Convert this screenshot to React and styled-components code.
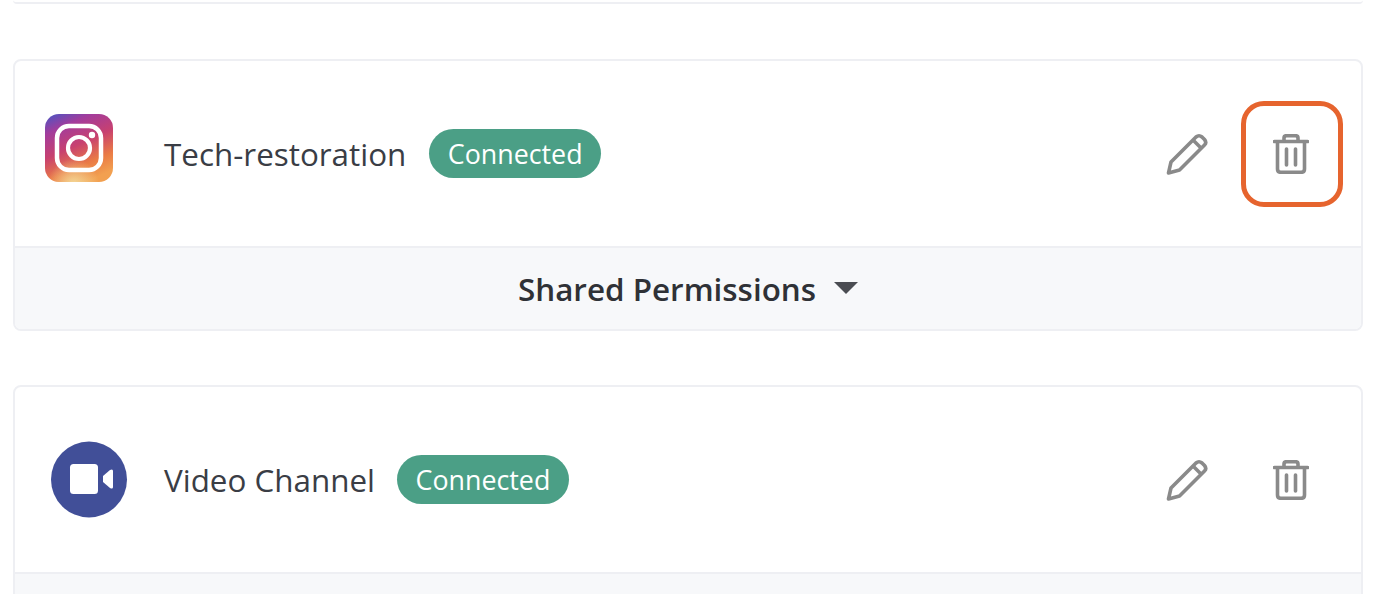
import React from 'react'
import styled, { createGlobalStyle } from 'styled-components'

const GlobalStyle = createGlobalStyle`
  html, body {
    margin: 0;
    height: 100%;
    overflow: hidden;
    background: #fff;
  }
  body {
    font-family: "Open Sans", "Noto Sans", sans-serif;
    color: #33363d;
  }
`

const Page = styled.div`
  height: 594px;
  overflow: hidden;
  padding: 0 13px 0 13px;
  width: 1350px;
  box-sizing: content-box;
`

const PrevCardEdge = styled.div`
  height: 2px;
  border-bottom: 2px solid #eeeff3;
  border-radius: 0 0 6px 6px;
  margin-bottom: 55px;
`

const Card = styled.section`
  box-sizing: border-box;
  width: 1350px;
  border: 2px solid #eeeff3;
  border-radius: 8px;
  overflow: hidden;
  margin-bottom: 54px;
  background: #fff;
`

const Row = styled.div`
  display: flex;
  align-items: center;
  height: 185px;
  padding: 0 18px 0 30px;
`

const IconSlot = styled.div`
  flex: 0 0 119px;
  display: flex;
  align-items: center;
  padding-left: ${p => p.$indent || 0}px;
  margin-top: ${p => p.$lift ? -p.$lift * 2 : 0}px;
  box-sizing: border-box;
`

const Name = styled.span`
  font-size: 31.4px;
  line-height: 40px;
  color: #3a3d45;
`

const Badge = styled.span`
  margin-left: ${p => p.$gap}px;
  background: #4b9f86;
  color: #fff;
  font-size: 26.8px;
  line-height: 49px;
  height: 49px;
  padding: 0 18.500px;
  border-radius: 25px;
`

const Actions = styled.div`
  margin-left: auto;
  display: flex;
  align-items: center;
  gap: 2px;
`

const ActionButton = styled.button`
  box-sizing: border-box;
  width: 102px;
  height: 106px;
  padding: 0 2px 0 0;
  display: flex;
  align-items: center;
  justify-content: center;
  background: none;
  border: 5px solid ${p => p.$highlight ? '#e6642e' : 'transparent'};
  border-radius: 23px;
`

const Footer = styled.div`
  height: 83px;
  display: flex;
  align-items: center;
  justify-content: center;
  gap: 18px;
  background: #f7f8fa;
  border-top: 2px solid #eeeff3;
  box-sizing: border-box;
`

const FooterLabel = styled.span`
  margin-top: 2px;
  font-size: 31.4px;
  line-height: 1.1;
  font-weight: 600;
  color: #2f3136;
`

const Caret = styled.span`
  width: 0;
  height: 0;
  margin-top: -2px;
  border-left: 12px solid transparent;
  border-right: 12px solid transparent;
  border-top: 12px solid #4a4c52;
`

const InstagramIcon = () => (
  <svg width="68" height="68" viewBox="0 0 68 68">
    <defs>
      <linearGradient id="igBase" x1="0.15" y1="0" x2="0.6" y2="1">
        <stop offset="0" stopColor="#5a50bc" />
        <stop offset="0.2" stopColor="#a33c9c" />
        <stop offset="0.5" stopColor="#c8416f" />
        <stop offset="0.78" stopColor="#ea7b45" />
        <stop offset="1" stopColor="#f2a050" />
      </linearGradient>
      <radialGradient id="igGlow" cx="42%" cy="104%" r="38%">
        <stop offset="0" stopColor="#f4dc9c" stopOpacity="0.95" />
        <stop offset="1" stopColor="#f4dc9c" stopOpacity="0" />
      </radialGradient>
    </defs>
    <rect width="68" height="68" rx="14" fill="url(#igBase)" />
    <rect width="68" height="68" rx="14" fill="url(#igGlow)" />
    <rect x="12" y="12" width="44" height="44" rx="12" fill="none" stroke="#fff" strokeWidth="4.500" />
    <circle cx="34" cy="34" r="11" fill="none" stroke="#fff" strokeWidth="4.200" />
    <circle cx="47" cy="21" r="3.200" fill="#fff" />
  </svg>
)

const VideoIcon = () => (
  <svg width="77" height="77" viewBox="0 0 77 77">
    <circle cx="38" cy="38.500" r="38" fill="#414f98" />
    <rect x="19" y="23" width="28" height="30" rx="3.500" fill="#fff" />
    <path d="M52 35 L59 29 Q62 27.500 62 30 V46 Q62 48.500 59 47 L52 41 Z" fill="#fff" />
  </svg>
)

const PencilIcon = () => (
  <svg width="44" height="44" viewBox="0 0 44 44" fill="none" stroke="#8a8a8a" strokeWidth="3.600" strokeLinejoin="round">
    <path d="M3.500 41 L6 30 L31 5 Q34 2.500 37 5 L39.500 7.500 Q42 10.500 39.500 13 L14.500 38 Z" />
    <path d="M28 8 L36.500 16.500" />
  </svg>
)

const TrashIcon = () => (
  <svg width="36" height="40" viewBox="0 0 36 40" fill="none" stroke="#8a8a8a" strokeWidth="3.600" strokeLinecap="round" strokeLinejoin="round">
    <path d="M1.500 7.500 H34.500" />
    <path d="M11 7 V4 Q11 1.700 13.500 1.700 H22.500 Q25 1.700 25 4 V7" />
    <path d="M4.500 8 V35 Q4.500 38.300 8 38.300 H28 Q31.500 38.300 31.500 35 V8" />
    <path d="M13.500 15 V31" />
    <path d="M22.500 15 V31" />
  </svg>
)

const ChannelCard = ({ icon, indent, lift, name, gap, highlight, children }) => (
  <Card>
    <Row>
      <IconSlot $indent={indent} $lift={lift}>{icon}</IconSlot>
      <Name>{name}</Name>
      <Badge $gap={gap}>Connected</Badge>
      <Actions>
        <ActionButton aria-label="Edit"><PencilIcon /></ActionButton>
        <ActionButton aria-label="Delete" $highlight={highlight}><TrashIcon /></ActionButton>
      </Actions>
    </Row>
    <Footer>{children}</Footer>
  </Card>
)

export default function App() {
  return (
    <Page>
      <GlobalStyle />
      <PrevCardEdge />
      <ChannelCard icon={<InstagramIcon />} lift={6} name="Tech-restoration" gap={23} highlight>
        <FooterLabel>Shared Permissions</FooterLabel>
        <Caret />
      </ChannelCard>
      <ChannelCard icon={<VideoIcon />} indent={6} name="Video Channel" gap={22} />
    </Page>
  )
}
